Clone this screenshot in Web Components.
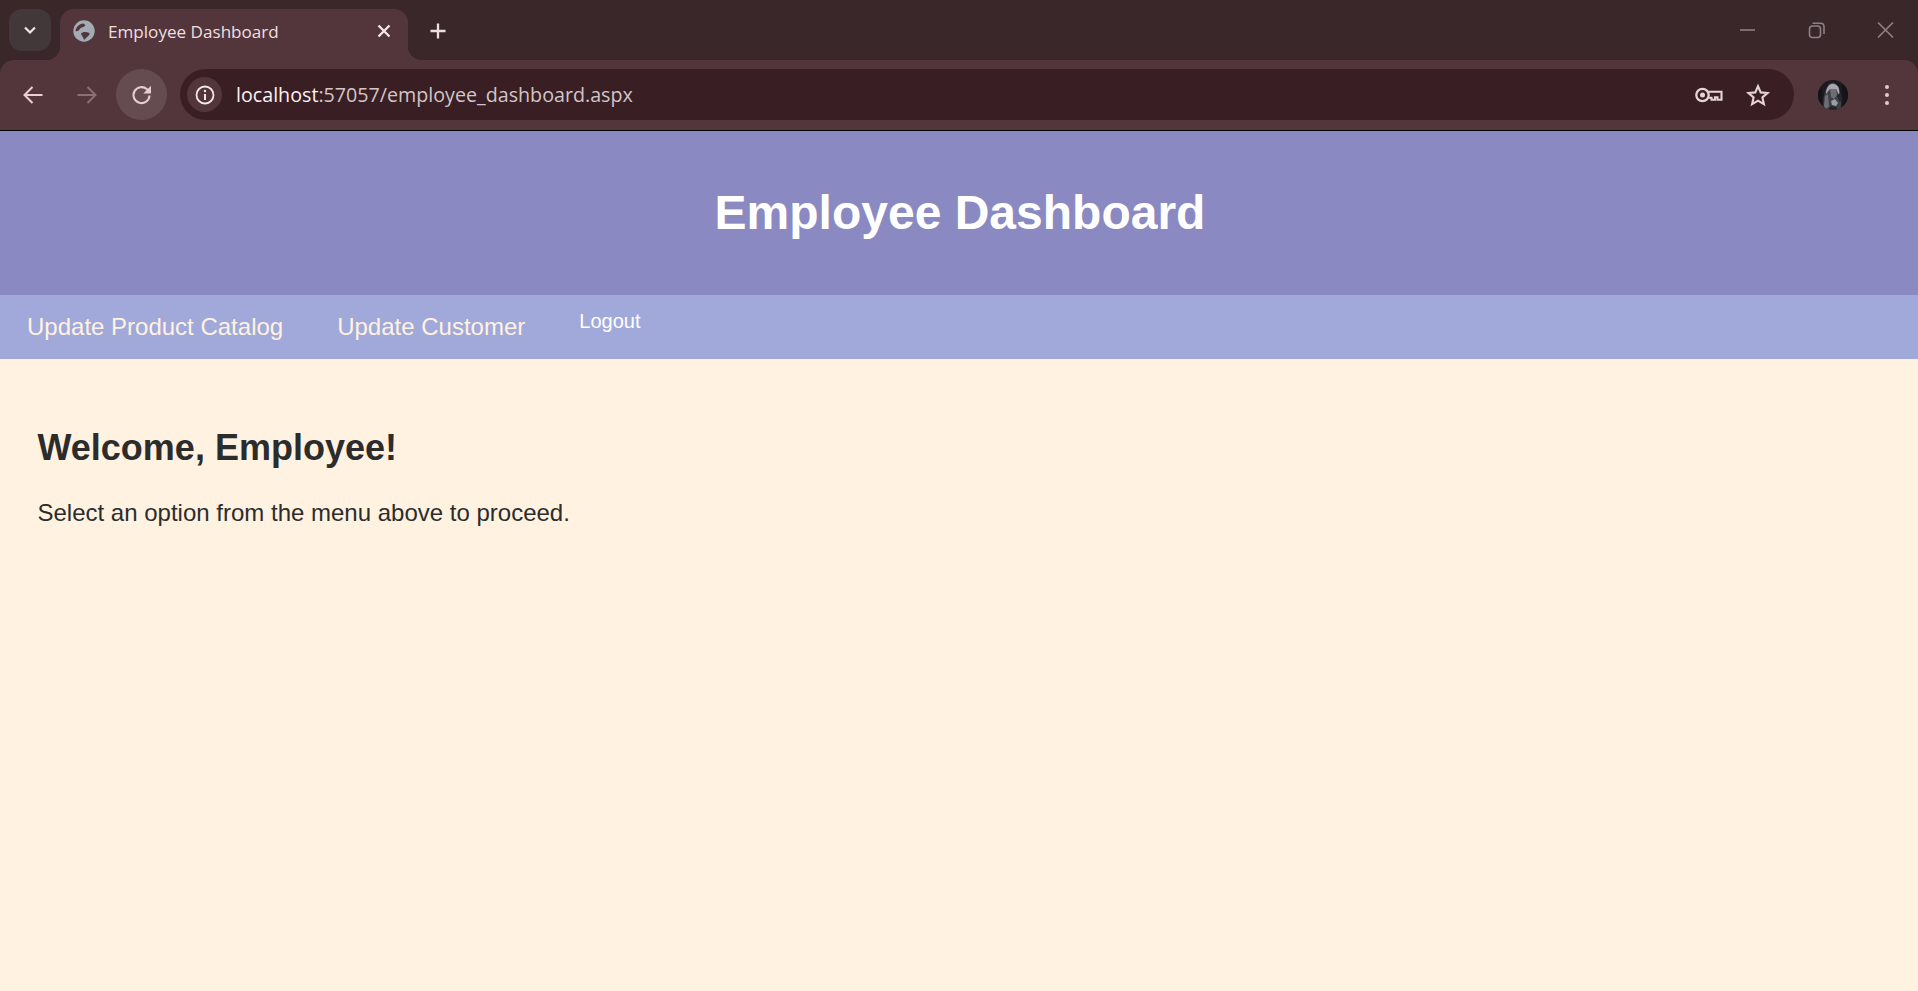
<!DOCTYPE html>
<html>
<head>
<meta charset="utf-8">
<title>Employee Dashboard</title>
<style>
    html, body { margin: 0; padding: 0; height: 100%; overflow: hidden; background: #fff2e0; }
    body { display: flex; flex-direction: column; font-family: "Liberation Sans", Arial, sans-serif; }
</style>
</head>
<body>
<browser-tabs title-text="Employee Dashboard"></browser-tabs>
<browser-toolbar host-text="localhost" path-text=":57057/employee_dashboard.aspx"></browser-toolbar>
<page-header>Employee Dashboard</page-header>
<nav-bar>
    <nav-link>Update Product Catalog</nav-link>
    <nav-link>Update Customer</nav-link>
    <nav-link small>Logout</nav-link>
</nav-bar>
<welcome-panel heading="Welcome, Employee!">Select an option from the menu above to proceed.</welcome-panel>

<script>
class BrowserTabs extends HTMLElement {
    constructor() {
        super();
        this.attachShadow({ mode: 'open' });
    }

    connectedCallback() {
        const title = this.getAttribute('title-text') || '';
        this.shadowRoot.innerHTML = `
            <style>
                :host { display: flex; height: 60px; flex: none; background: #3a272a; box-sizing: border-box; padding: 9px 0 0 9px; align-items: flex-start; }
                .drop { width: 42px; height: 42px; border-radius: 13px; background: #433839; display: flex; align-items: center; justify-content: center; margin-right: 9px; }
                .tab { position: relative; width: 348px; height: 51px; flex: none; box-sizing: border-box; background: #52363b; border-radius: 14px 14px 0 0; display: flex; align-items: center; padding: 0 15px 8px 12px; }
                .tab::before, .tab::after { content: ""; position: absolute; bottom: 0; width: 14px; height: 14px; }
                .tab::before { left: -14px; background: radial-gradient(circle at 0 0, transparent 14px, #52363b 14.5px); }
                .tab::after { right: -14px; background: radial-gradient(circle at 100% 0, transparent 14px, #52363b 14.5px); }
                .title { margin-left: 12px; padding-top: 1px; flex: 1; font: 17.1px "Open Sans", "Noto Sans", sans-serif; color: #f0dfe0; white-space: nowrap; }
                .plus { margin: 9.5px 0 0 18px; width: 24px; height: 24px; flex: none; }
                .spacer { flex: 1; }
                .win { display: flex; flex: none; margin-top: 5.5px; }
                .win svg { display: block; width: 69px; height: 30px; }
                .win svg.last { width: 67px; }
            </style>
            <div class="drop">
                <svg width="16" height="16" viewBox="0 0 16 16"><path d="M3 5.500 8 10.500 13 5.500" fill="none" stroke="#f2e6e6" stroke-width="2.200"/></svg>
            </div>
            <div class="tab">
                <svg width="24" height="24" viewBox="6 6 24 24">
                    <circle cx="18" cy="18" r="10.700" fill="#a3acb4"/>
                    <path d="M9.500 18C10 14 13 11 17.500 10.500L19.500 12.500C17 15 14.500 14 13.500 16.500 12.500 18 11 18.500 9.500 18Z" fill="#52363b"/>
                    <path d="M15 20.500C17 18.500 20 18.500 23.500 20 24 21.500 22 23.500 20.500 24.500 19.500 25.500 18.500 26.500 18 27 17.500 24 15.500 23 15 20.500Z" fill="#52363b"/>
                </svg>
                <span class="title">${title}</span>
                <svg width="18" height="18" viewBox="0 0 18 18"><path d="M3.500 3.500 14.500 14.500M14.500 3.500 3.500 14.500" stroke="#f4e8e8" stroke-width="2.300" fill="none"/></svg>
            </div>
            <svg class="plus" viewBox="0 0 24 24"><path d="M12 4.500V19.500M4.500 12H19.500" stroke="#ecdfe0" stroke-width="2.300" fill="none"/></svg>
            <div class="spacer"></div>
            <div class="win">
                <svg viewBox="0 0 69 30"><path d="M27 15H42" stroke="#8d8183" stroke-width="1.600"/></svg>
                <svg viewBox="0 0 69 30">
                    <rect x="27.500" y="11" width="11" height="11.500" rx="3" fill="none" stroke="#8d8183" stroke-width="1.600"/>
                    <path d="M30.500 8.300H38.500Q42 8.300 42 11.800V19" fill="none" stroke="#8d8183" stroke-width="1.600"/>
                </svg>
                <svg class="last" viewBox="0 0 67 30"><path d="M27 7.500 42 22.500M42 7.500 27 22.500" stroke="#8d8183" stroke-width="1.700" fill="none"/></svg>
            </div>
        `;
    }
}

class BrowserToolbar extends HTMLElement {
    constructor() {
        super();
        this.attachShadow({ mode: 'open' });
    }

    connectedCallback() {
        const host = this.getAttribute('host-text') || '';
        const path = this.getAttribute('path-text') || '';
        this.shadowRoot.innerHTML = `
            <style>
                :host { display: block; flex: none; height: 70px; background: #3a272a; border-bottom: 1px solid #000; box-sizing: content-box; }
                .bar { height: 70px; box-sizing: border-box; background: #52363b; border-radius: 14px 14px 0 0; display: flex; align-items: flex-start; padding: 9px 0 0 0; }
                .btn { width: 51px; height: 51px; display: flex; align-items: center; justify-content: center; flex: none; border-radius: 50%; }
                .back { margin-left: 7px; }
                .fwd { margin-left: 3px; }
                .reload { margin-left: 4px; background: #654c50; }
                .omni { margin-left: 13px; width: 1614px; height: 51px; flex: none; border-radius: 26px; background: #391f24; display: flex; align-items: center; box-sizing: border-box; padding: 0 23.5px 0 7px; }
                .info { width: 35px; height: 35px; border-radius: 50%; background: #52363b; display: flex; align-items: center; justify-content: center; flex: none; }
                .url { margin-left: 14px; flex: 1; font: 19.68px "Open Sans", "Noto Sans", sans-serif; color: #d3c5c8; white-space: nowrap; }
                .url b { font-weight: normal; color: #fbf2f3; }
                .key { margin-right: 21.5px; }
                .avatar { margin-left: 24px; margin-top: 11px; flex: none; }
                .menu { margin-left: 35px; margin-top: 15px; flex: none; }
            </style>
            <div class="bar">
                <div class="btn back">
                    <svg width="26" height="26" viewBox="0 0 26 26"><path d="M22.500 13H4.500M12.500 5 4.500 13 12.500 21" fill="none" stroke="#eccfd2" stroke-width="2"/></svg>
                </div>
                <div class="btn fwd">
                    <svg width="26" height="26" viewBox="0 0 26 26"><path d="M3.500 13H21.500M13.500 5 21.500 13 13.500 21" fill="none" stroke="#8a6f73" stroke-width="2"/></svg>
                </div>
                <div class="btn reload">
                    <svg width="24" height="24" viewBox="0 0 24 24"><path d="M19.500 12.500A8 8 0 1 1 17 6.300L19.500 8.800" fill="none" stroke="#e8ccd0" stroke-width="2.100"/><path d="M21 2.800V10.500H13.300Z" fill="#e8ccd0"/></svg>
                </div>
                <div class="omni">
                    <div class="info">
                        <svg width="22" height="22" viewBox="0 0 22 22"><circle cx="11" cy="11" r="8.500" fill="none" stroke="#f4e8e8" stroke-width="1.800"/><path d="M11 10V16" stroke="#f4e8e8" stroke-width="2"/><circle cx="11" cy="7" r="1.200" fill="#f4e8e8"/></svg>
                    </div>
                    <div class="url"><b>${host}</b>${path}</div>
                    <svg class="key" width="28" height="16" viewBox="0 0 28 16"><circle cx="7.500" cy="8" r="6.200" fill="none" stroke="#e6d4d6" stroke-width="2.300"/><circle cx="7.500" cy="8" r="2.500" fill="#e6d4d6"/><path d="M13.500 4.800H26.500V12.800H22.500V10.200H20V12.800H16.500V10.800H13.500" fill="none" stroke="#e6d4d6" stroke-width="2.100"/></svg>
                    <svg width="26" height="26" viewBox="0 0 26 26"><path d="M13 4.200 15.700 10.400 22.500 11 17.400 15.500 18.900 22.200 13 18.700 7.100 22.200 8.600 15.500 3.500 11 10.300 10.400Z" fill="none" stroke="#e6d4d6" stroke-width="2.100"/></svg>
                </div>
                <svg class="avatar" width="30" height="30" viewBox="0 0 30 30">
                    <defs><clipPath id="c"><circle cx="15" cy="15" r="15"/></clipPath></defs>
                    <g clip-path="url(#c)">
                        <rect width="30" height="30" fill="#1b1a1f"/>
                        <path d="M6 30C4 20 7 5 13 3 20 1 24 12 23 30Z" fill="#3e3f47"/>
                        <path d="M8 14C8 7 12 3 16 4 21 5 22 10 21 15L18 9 12 9Z" fill="#a6a7ae"/>
                        <path d="M12 9 18 9 19 15 16 19 13 17Z" fill="#6e6e76"/>
                        <path d="M7 16 10 14 11 26 8 30 6 26Z" fill="#6c6d75"/>
                        <path d="M13 21 17 19 20 23 18 26 14 25Z" fill="#9a9da8"/>
                        <path d="M19 15 23 13 25 22 21 21Z" fill="#27272c"/>
                        <path d="M10 30 13 26 18 27 20 30Z" fill="#232328"/>
                        <path d="M0 10 4 8 4 30H0ZM24 4 30 8V30H25Z" fill="#141418"/>
                    </g>
                </svg>
                <svg class="menu" width="8" height="22" viewBox="0 0 8 22"><circle cx="4" cy="3" r="2" fill="#eec4cb"/><circle cx="4" cy="11" r="2" fill="#eec4cb"/><circle cx="4" cy="19" r="2" fill="#eec4cb"/></svg>
            </div>
        `;
    }
}

class PageHeader extends HTMLElement {
    constructor() {
        super();
        this.attachShadow({ mode: 'open' });
        this.shadowRoot.innerHTML = `
            <style>
                :host { display: block; flex: none; background: #8a89c2; color: #fff; text-align: center; padding: 50px 0 50px 2px; }
                h1 { margin: 0; font: bold 48px/64px "Liberation Sans", Arial, sans-serif; }
            </style>
            <h1><slot></slot></h1>
        `;
    }
}

class NavBar extends HTMLElement {
    constructor() {
        super();
        this.attachShadow({ mode: 'open' });
        this.shadowRoot.innerHTML = `
            <style>
                :host { display: flex; flex: none; height: 64px; background: #a1a9da; box-sizing: border-box; padding-left: 27px; gap: 54px; align-items: flex-start; }
            </style>
            <slot></slot>
        `;
    }
}

class NavLink extends HTMLElement {
    constructor() {
        super();
        this.attachShadow({ mode: 'open' });
        this.shadowRoot.innerHTML = `
            <style>
                :host { display: block; color: #fff2e0; font: 24px/30px "Liberation Sans", Arial, sans-serif; padding-top: 17px; white-space: nowrap; }
                :host([small]) { color: #fff; font-size: 20px; line-height: 24px; padding-top: 14px; }
            </style>
            <slot></slot>
        `;
    }
}

class WelcomePanel extends HTMLElement {
    constructor() {
        super();
        this.attachShadow({ mode: 'open' });
    }

    connectedCallback() {
        const heading = this.getAttribute('heading') || '';
        this.shadowRoot.innerHTML = `
            <style>
                :host { display: block; flex: 1; background: #fff2e0; color: #2c2c2c; padding: 68px 38px 0 37.5px; }
                h2 { margin: 0 0 29px; font: bold 36px/42px "Liberation Sans", Arial, sans-serif; }
                p { margin: 0; font: 24px/30px "Liberation Sans", Arial, sans-serif; }
            </style>
            <h2>${heading}</h2>
            <p><slot></slot></p>
        `;
    }
}

customElements.define('browser-tabs', BrowserTabs);
customElements.define('browser-toolbar', BrowserToolbar);
customElements.define('page-header', PageHeader);
customElements.define('nav-bar', NavBar);
customElements.define('nav-link', NavLink);
customElements.define('welcome-panel', WelcomePanel);
</script>
</body>
</html>
